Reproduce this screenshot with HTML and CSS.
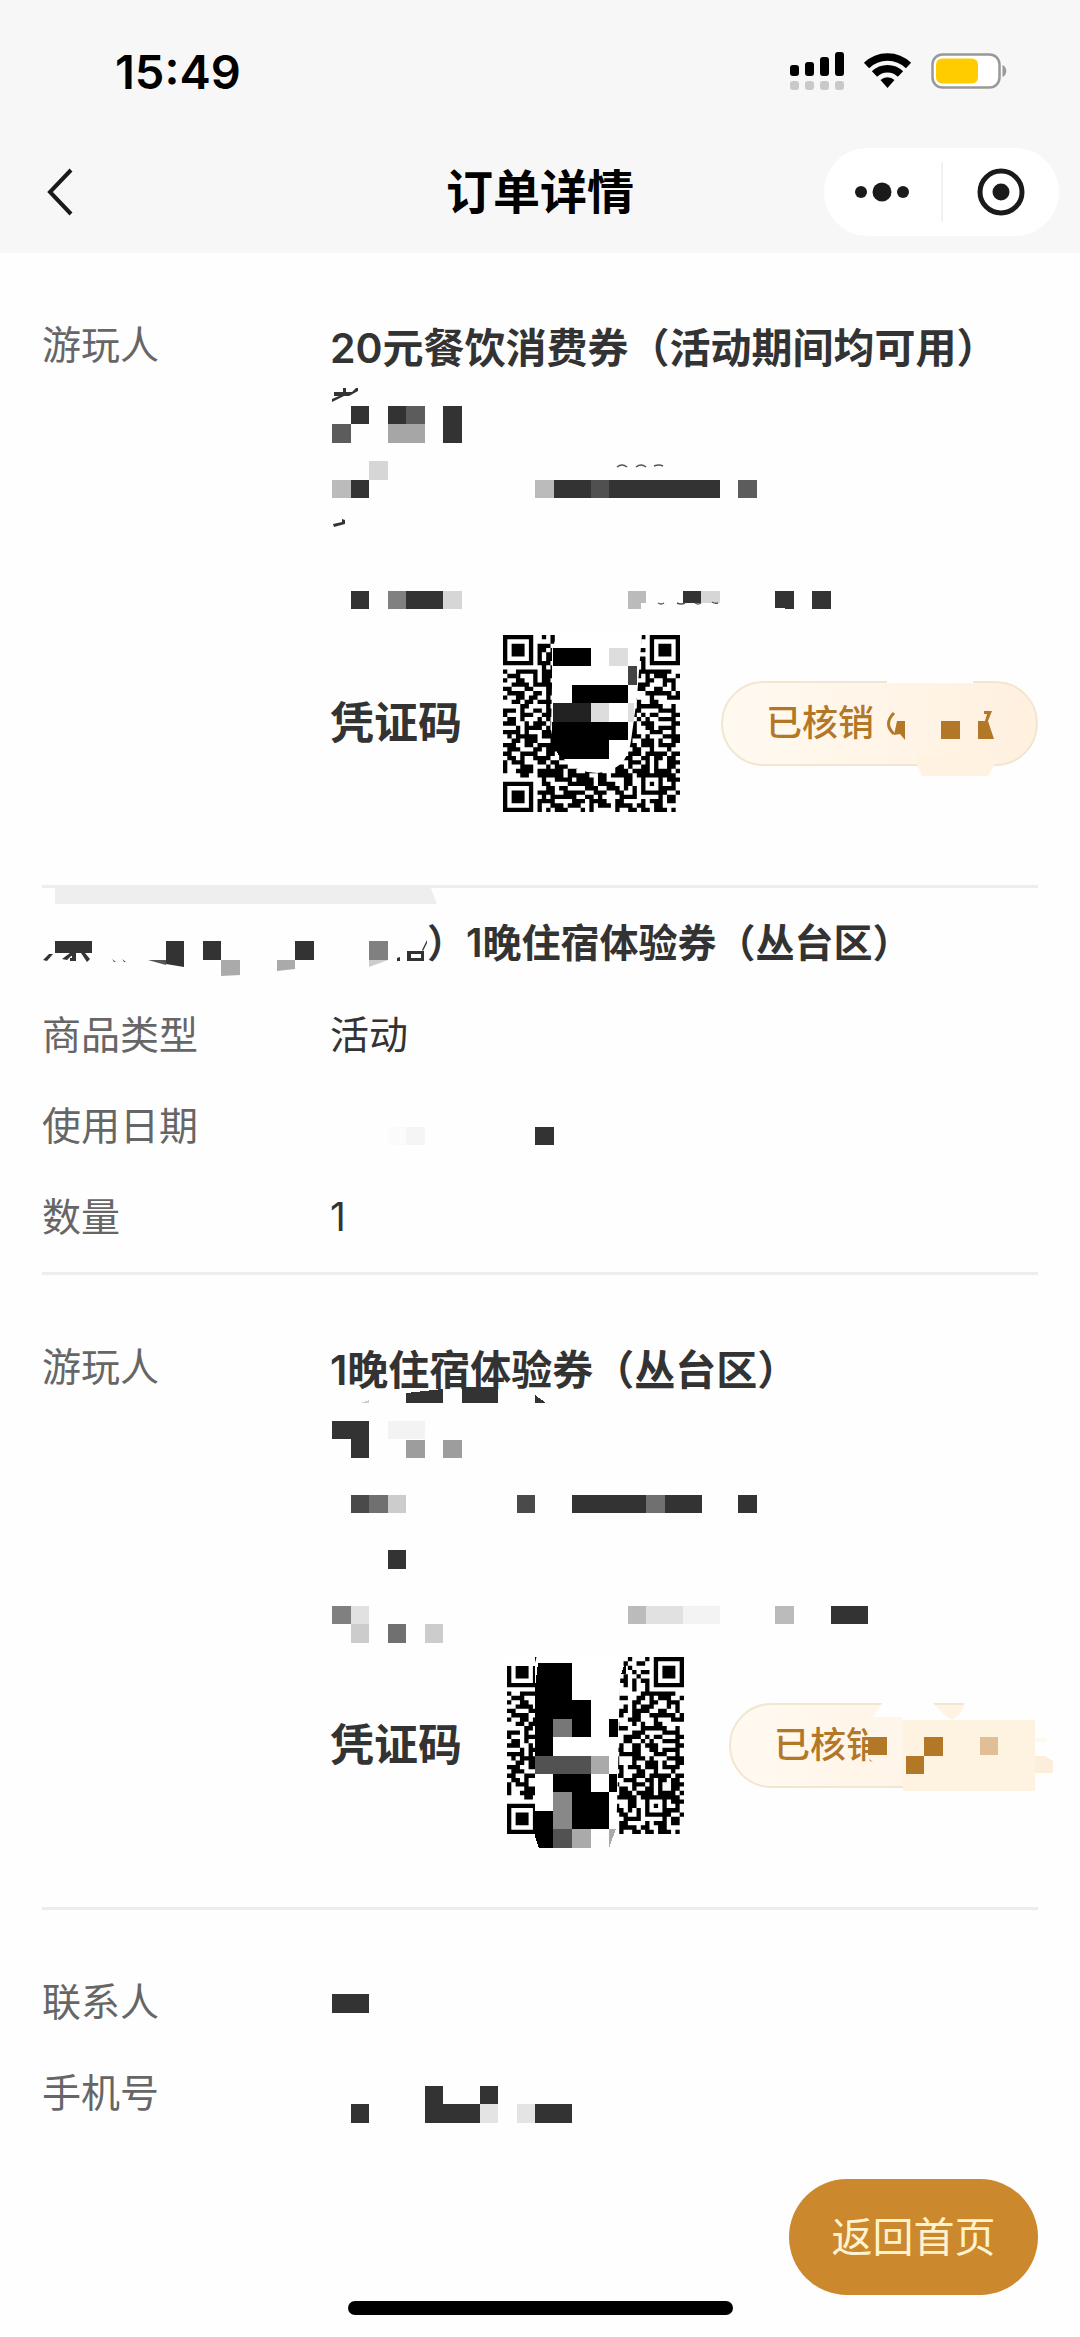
FILE: index.html
```html
<!DOCTYPE html>
<html lang="zh-CN">
<head>
<meta charset="utf-8">
<meta name="viewport" content="width=device-width">
<title>订单详情</title>
<link rel="stylesheet" href="styles.css">
</head>
<body>
<header class="header">
  <div class="status-bar">
    <span class="clock">15:49</span>
    <div class="status-icons">
      <svg width="54" height="40" viewBox="0 0 54 40"><g fill="#000"><rect y="13" width="9" height="11" rx="3"/><rect x="15" y="10" width="9" height="14" rx="3"/><rect x="30" y="5" width="9" height="19" rx="3"/><rect x="45" width="9" height="24" rx="3"/></g><g fill="#c9c9c9"><rect y="29" width="9" height="9" rx="3"/><rect x="15" y="29" width="9" height="9" rx="3"/><rect x="30" y="29" width="9" height="9" rx="3"/><rect x="45" y="29" width="9" height="9" rx="3"/></g></svg>
      <svg width="47" height="40" viewBox="0 0 47 40"><g fill="none" stroke="#000" stroke-width="7.500"><path d="M2.500 13.500a30 30 0 0 1 42 0"/><path d="M10.500 22a18.500 18.500 0 0 1 26 0"/></g><path d="M16.500 28a10 10 0 0 1 14 0l-7 8z"/></svg>
      <svg width="77" height="40" viewBox="0 0 77 40"><rect x="1.500" y="2.500" width="67" height="33" rx="10" fill="#fff" stroke="#999" stroke-width="2.500"/><rect x="5" y="6.500" width="42" height="25" rx="6" fill="#ffcc00"/><path d="M71.500 13c5 2 5 10 0 12z" fill="#999"/></svg>
    </div>
  </div>
  <nav class="nav-bar">
    <button class="back" aria-label="返回"><svg width="28" height="48" viewBox="0 0 28 48"><path d="M25 2 4 24 25 46" fill="none" stroke="#1a1a1a" stroke-width="4"/></svg></button>
    <h1 class="title">订单详情</h1>
    <div class="capsule">
      <button class="capsule-button" aria-label="更多"><svg width="54" height="24" viewBox="0 0 54 24"><g fill="#1a1a1a"><circle cx="6" cy="12" r="6"/><circle cx="27" cy="12" r="9.500"/><circle cx="48" cy="12" r="6"/></g></svg></button>
      <button class="capsule-button" aria-label="关闭"><svg width="50" height="50" viewBox="0 0 50 50"><circle cx="25" cy="25" r="21" fill="none" stroke="#1a1a1a" stroke-width="5"/><circle cx="25" cy="25" r="8.500" fill="#1a1a1a"/></svg></button>
    </div>
  </nav>
</header>

<main>
  <section class="section traveller">
    <div class="label">游玩人</div>
    <div>
      <h2 class="ticket">20元餐饮消费券（活动期间均可用）</h2>
      <svg class="details" viewBox="330 381 710 240" aria-hidden="true">
        <g shape-rendering="crispEdges" fill="#333">
          <path d="M351 406h18v18h-18zM388 406h18v18h-18zM443 406h19v37h-19zM351 480h18v18h-18zM554 480h166v18h-166zM351 591h18v18h-18zM406 591h37v18h-37zM683 591h18v12h-18zM775 591h19v18l-19-1zM812 591h19v18h-19z"/>
          <path fill="#5c5c5c" d="M332 424h19v19h-19zM406 406h19v18h-19zM738 480h19v18h-19z"/>
          <path fill="#a6a6a6" d="M388 424h37v19h-37z"/>
          <path fill="#d6d6d6" d="M369 461h19v19h-19zM443 591h19v18h-19zM701 591h19v12h-19z"/>
          <path fill="#bbb" d="M332 480h19v18h-19zM535 480h19v18h-19zM628 591h18v12h-5v6h-13z"/>
          <path fill="#505050" d="M591 480h18v18h-18z"/>
          <path fill="#808080" d="M388 591h18v18h-18z"/>
        </g>
        <g fill="#333"><path d="M334 392h9v-4h3v4h6l4-4h2v3l-9 5h-5l-12 6v-3l7-3h-5zM333 524l9-2v-3l3 1v4l-11 3z"/><path fill="none" stroke="#555" stroke-width="1.500" d="M617 467q5-4 10 0M636 467q5-4 10 0M654 466q5-2 9 0M658 603q3 2 6 0M677 603q4 2 8 0M695 603q3 2 6 0M712 602q3 2 6 1"/></g>
      </svg>
      <div class="voucher">
        <strong class="voucher-name">凭证码</strong>
        <svg class="qr" viewBox="0 0 177 177" role="img" aria-label="凭证二维码">
          <g class="modules"></g>
          <path fill="#fff" d="M55-2 49 14V50L48 95q8 42 46 43 30-2 34-32l6-44 5-64z"/>
          <g shape-rendering="crispEdges"><path d="M50 13h38v18H50zM69 50h56v18H69zM49 87h76v18h-19v19H59q-8-8-10-22z"/><path fill="#222" d="M50 68h38v19H50z"/><path fill="#ddd" d="M88 68h18v19H88zM106 13h19v18h-19zM125 68h6v19h-6z"/><path fill="#444" d="M125 31h9v19h-9z"/></g>
        </svg>
        <span class="status">已核销
          <svg class="smudge" width="380" height="140" viewBox="700 650 380 140" aria-hidden="true">
            <path fill="#fff" d="M887 678h86v4h-86z"/><path fill="#fff2e1" d="M917 755h78v8l-7 12h-66l-5-12z"/>
            <path fill="#b37728" d="M897 720h8v19l-5-6-6 1zM941 720h19v18h-19zM978 720h10l6 18h-16zM984 710h8l-4 10h-3l2-7h-3z"/><path d="M894 712q-11 11 0 21" fill="none" stroke="#b37728" stroke-width="3"/>
          </svg>
        </span>
      </div>
    </div>
  </section>

  <section class="section product">
    <svg class="rule-smudge" width="382" height="19" viewBox="0 0 382 19" aria-hidden="true"><path fill="#eee" d="M0 0h375l2 6 5 13H0z"/></svg>
    <h2 class="product-name"><svg width="385" height="60" viewBox="42 913 385 60" aria-hidden="true"><g fill="#333"><path d="M55 941h37v12H55zM43 960l6-6h4l-6 7zM62 959l8-6h4l-7 7zM72 953h4v8h-6v-3h2zM81 953h4l5 6-3 3zM166 941h18v26l-18-3zM203 941h18v19h-18zM295 941h19v19h-19zM397 958l3-1v4h-3zM407 953h4v8h-4zM407 951h17v10h-3v-7h-14zM407 958h14v3h-14zM422 950l5-10v3l-4 8z"/><path fill="#555" d="M148 960h18v5zM112 959l4 3h-2zM122 959l4 3h-2z"/><path fill="#aaa" d="M221 960h19v15l-19 1zM277 960h18v9l-18 2z"/><path fill="#808080" d="M369 941h19v19h-19z"/><path fill="#ccc" d="M369 960h19l-19 7z"/></g></svg>）1晚住宿体验券（丛台区）</h2>
    <dl class="fields">
      <div class="field"><dt>商品类型</dt><dd>活动</dd></div>
      <div class="field"><dt>使用日期</dt><dd><svg width="300" height="60" viewBox="330 1095 300 60" aria-hidden="true"><path fill="#333" d="M535 1126h19v18h-19z"/><path fill="#f5f5f5" d="M406 1126h19v18h-19z"/><path fill="#fbfbfb" d="M388 1126h18v18h-18z"/></svg></dd></div>
      <div class="field"><dt>数量</dt><dd>1</dd></div>
    </dl>
  </section>

  <section class="section traveller">
    <div class="label">游玩人</div>
    <div>
      <h2 class="ticket">1晚住宿体验券（丛台区）</h2>
      <svg class="details" viewBox="330 1403 710 240" aria-hidden="true">
        <g shape-rendering="crispEdges" fill="#333">
          <path d="M406 1393l37-4v14h-37zM462 1387h36v16h-36zM535 1395l11 8h-11zM332 1421h37v37h-18v-19h-19zM572 1495h130v18h-130zM738 1495h19v18h-19zM388 1550h18v19h-18zM831 1606h37v18h-37z"/>
          <path fill="#4a4a4a" d="M351 1495h18v18h-18zM517 1495h18v18h-18z"/>
          <path fill="#707070" d="M369 1495h19v18h-19zM646 1495h19v18h-19zM388 1624h18v19h-18z"/>
          <path fill="#808080" d="M332 1606h19v18h-19z"/>
          <path fill="#9d9d9d" d="M406 1440h19v18h-19zM443 1440h19v18h-19z"/>
          <path fill="#bbb" d="M628 1606h18v18h-18zM775 1606h19v18h-19z"/>
          <path fill="#ccc" d="M388 1495h18v18h-18zM351 1624h18v19h-18zM425 1624h18v19h-18zM360 1403l9-3v3z"/>
          <path fill="#e1e1e1" d="M351 1606h18v18h-18zM646 1606h37v18h-37z"/>
          <path fill="#f3f3f3" d="M388 1421h37v18h-37zM683 1606h37v18h-37z"/>
        </g>
      </svg>
      <div class="voucher voucher-wide">
        <strong class="voucher-name">凭证码</strong>
        <svg class="qr" viewBox="0 0 177 177" role="img" aria-label="凭证二维码">
          <g class="modules"></g>
          <path fill="#fff" d="M-2-2h30v11H-2zM30-2h84l-2 60-1 60-2 62H28V6z"/>
          <g shape-rendering="crispEdges"><path d="M31 6h34v37h19v37H65V62H46v37H28V30zM102 62h9v18h-9zM46 117h38v18h18v37H65v-37H46zM102 117h8v18h-8zM28 154h18v37H32l-4-12zM114 17l5-13v13z"/><path fill="#777" d="M46 62h19v18H46z"/><path fill="#525252" d="M28 99h56v18H28zM46 172h19v19H46z"/><path fill="#aaa" d="M84 99h18v18H84zM65 172h19v19H65zM102 172h7l-7 19z"/><path fill="#888" d="M46 135h19v37H46z"/></g>
        </svg>
        <span class="status">已核销
          <svg class="smudge smudge-low" width="380" height="150" viewBox="700 1670 380 150" aria-hidden="true">
            <path fill="#fefefe" d="M883 1698h46l14 14 8 6h-78v-5zM965 1698h90v95h-22v-75h-82l8-6z"/><path fill="#fef2e1" d="M902 1718h132v71H902z"/><path fill="#fdeedb" d="M1034 1754h10l8 5v12h-18z"/><path fill="#fef8ef" d="M1034 1736h12v4h-12z"/>
            <path fill="#fef6ea" d="M868 1715h34v56h-34z"/><path fill="#b37728" d="M867 1735h19v18h-19zM923 1735h19v19h-19zM905 1754h18v18h-18zM868 1757l4 3-3-1z"/><path fill="#e0be96" d="M979 1735h18v18h-18z"/>
          </svg>
        </span>
      </div>
    </div>
  </section>

  <section class="contact">
    <dl class="fields">
      <div class="field"><dt>联系人</dt><dd><svg width="300" height="60" viewBox="330 1971 300 60" aria-hidden="true"><path fill="#333" d="M332 1993h37v19h-37z"/></svg></dd></div>
      <div class="field"><dt>手机号</dt><dd><svg width="300" height="60" viewBox="330 2063 300 60" aria-hidden="true"><path fill="#333" d="M351 2104h18v19h-18zM425 2086h18v18h37v19h-55zM480 2086h18v18h-18zM535 2104h37v19h-37z"/><path fill="#e4e4e4" d="M480 2104h18v19h-18zM517 2104h18v19h-18z"/></svg></dd></div>
    </dl>
  </section>
</main>

<footer class="footer">
  <button class="home-button">返回首页</button>
  <div class="home-indicator"></div>
</footer>
<script src="qr.js"></script>
</body>
</html>
```
FILE: styles.css
```css
* { box-sizing: border-box; }
body {
  margin: 0;
  background: #fefefe;
  color: #333;
  font-family: Inter, "Noto Sans CJK SC", sans-serif;
  font-size: 39px;
  line-height: 60px;
}
h1, h2, dl, dd { margin: 0; }
button { padding: 0; border: 0; background: none; font: inherit; cursor: pointer; }
svg { display: block; overflow: visible; }

.header { background: #f7f7f7; }
.status-bar {
  display: flex;
  justify-content: space-between;
  align-items: center;
  height: 130px;
  padding: 14px 72px 0 115px;
}
.clock { color: #000; font-size: 47px; font-weight: 600; }
.status-icons { display: flex; gap: 20px; }
.nav-bar {
  display: grid;
  grid-template-columns: 1fr auto 1fr;
  align-items: center;
  height: 123px;
  padding: 0 21px;
}
.back { justify-self: start; margin-left: 25px; }
.title { color: #000; font-size: 47px; font-weight: 600; }
.capsule {
  display: flex;
  align-items: center;
  justify-self: end;
  width: 235px;
  height: 88px;
  border-radius: 44px;
  background: #fff;
}
.capsule-button { display: grid; flex: 1; place-items: center; height: 60px; }
.capsule-button + .capsule-button { border-left: 2px solid #f1f1f1; }

.section { margin: 0 42px; border-bottom: 3px solid #ededed; }
.traveller {
  display: grid;
  grid-template-columns: 288px 1fr;
  padding: 62px 0 60px;
}
.label, dt { color: #666; }
.ticket { font-size: 41px; font-weight: 600; line-height: 66px; }
.details { width: 710px; height: 240px; }
.voucher { display: flex; align-items: center; gap: 41px; height: 204px; }
.voucher-wide { gap: 45px; }
.voucher-name { font-size: 44px; font-weight: 600; white-space: nowrap; }
.qr { flex: none; width: 177px; height: 177px; }
.status {
  position: relative;
  flex: none;
  width: 317px;
  height: 85px;
  padding-left: 43px;
  border: 2px solid #f2e6d0;
  border-radius: 43px;
  background: linear-gradient(90deg, #fffaf1, #fff0df);
  color: #b37728;
  font-size: 36px;
  font-weight: 500;
  line-height: 81px;
}
.smudge { position: absolute; top: -32px; left: -23px; }
.smudge-low { left: -30px; top: -33px; }

.product { position: relative; padding: 25px 0 10px; }
.rule-smudge { position: absolute; top: -3px; left: 13px; }
.product-name {
  display: flex;
  margin-bottom: 16px;
  font-size: 39px;
  font-weight: 600;
  white-space: nowrap;
}
.field {
  display: grid;
  grid-template-columns: 288px 1fr;
  align-items: center;
  height: 91px;
}
.contact { padding: 46px 42px 0; }

.footer { padding: 41px 42px 22px; }
.home-button {
  display: block;
  width: 249px;
  height: 116px;
  margin: 0 0 6px auto;
  border-radius: 58px;
  background: #cb882d;
  color: #fff3cf;
  font-size: 41px;
}
.home-indicator {
  width: 385px;
  height: 14px;
  margin: 0 auto;
  border-radius: 7px;
  background: #000;
}
```
FILE: qr.js
```js
// Module rows of the voucher code, '#' is dark; the finder squares are added below.
const rows = [
  '.........#.#...#.##..#.#....#...#........',
  '...........#.#..#.#.##.....#..##.........',
  '........###....#..#.#..#....#............',
  '........##.#.#.##...#.#.#....#.##........',
  '........#.##...#..##..#.#..#..#..........',
  '........#.##.##..#.#..##..##.#.##........',
  '........###..##.#.#.#.#.#..#.#..#........',
  '.........#.#..#.#..##...##...#..#........',
  '#..#####.###.#..#.##..#..#.....########..',
  '.###...#.###.#..#.#.##..####..##.#.###..#',
  '#..##..#.##..#.#..##..#.#....##..##..###.',
  '..####.#####.#.##...##.#...#.#.###...#.#.',
  '##...##...##..##.#..#.#..###.####..##..#.',
  '.####..##.##.#..#..##.#..##..##..######.#',
  '#..##.##..#..#..##.#..###...###...#...###',
  '..##.##.####.#..#..#.#.###...#.#..##.....',
  '....##....#..#.#.##..#...###...######..#.',
  '###.#..##.##.#..#..#.##......###....####.',
  '#...###..###.##.#..#...##..####.#.##...##',
  '.##.#...#.#...##.#.##...#..##..#.#..####.',
  '###..#.###.##.##.#..#.##..#..##.###....##',
  '...#.####.#..##..#..##.####..##..##.####.',
  '####.#...####...##..##....#####...###..#.',
  '.#.#####.###.##.##...##.##...###.#...####',
  '..##.###...##...##.#..#.##...#..###.#..##',
  '###..##.#####..##..###..###.###.###.####.',
  '.###...##.###..#.##..###..#...##..#...#..',
  '##..####..##.##...##..#.###..###.#####.##',
  '.##.#..####..##..###..##...###..##.##.##.',
  '#.###...##.##...####..##.#...###.#.#..###',
  '#...###...#.###..###...##.##.#..##.#..##.',
  '#..####.######.##..####...###.####.####.#',
  '....##..######.#####..##.#####.#########.',
  '.........#..####.####.##....##..#...#.###',
  '.........##....######.####..##..#.#.#..#.',
  '..........##.##....###..###.#.#.#...####.',
  '........####..#####..###..##..#.######..#',
  '.........#.######..##.#....####.....#.##.',
  '........####....###.####..##....#.###.##.',
  '........#..###.###..#.###.####.##..##....',
  '........#.#.###...#.#.....#..##.##.###.#.'
];
const count = rows.length;
const size = 177 / count;
const path = (x, y, w, h) => `M${x * size} ${y * size}h${w * size}v${h * size}h${-w * size}z`;
let modules = '';
rows.forEach((row, y) => {
  for (const run of row.matchAll(/#+/g)) modules += path(run.index, y, run[0].length, 1);
});
let finders = '';
for (const [x, y] of [[0, 0], [34, 0], [0, 34]]) {
  finders += path(x, y, 7, 7) + path(x + 1, y + 1, 5, 5) + path(x + 2, y + 2, 3, 3);
}
document.querySelectorAll('.modules').forEach((group) => {
  group.innerHTML = `<path d="${modules}"/><path fill-rule="evenodd" d="${finders}"/>`;
});
```
